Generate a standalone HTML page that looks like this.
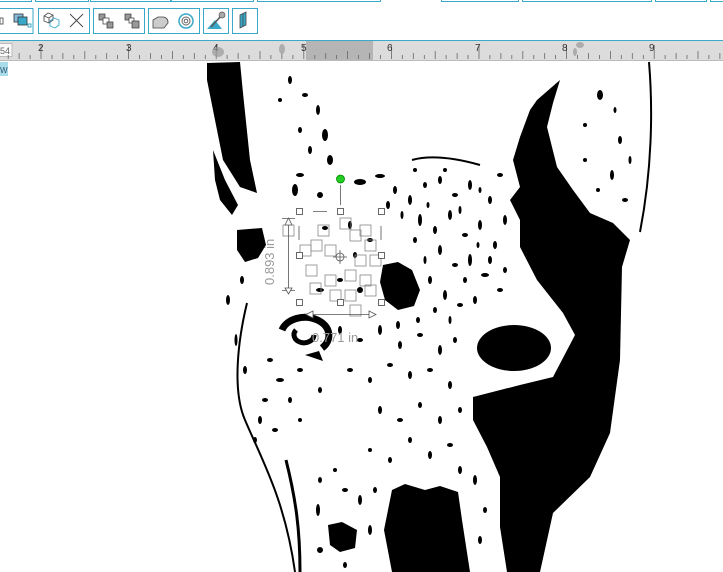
<!DOCTYPE html>
<html><head><meta charset="utf-8"><style>
html,body{margin:0;padding:0;width:723px;height:572px;overflow:hidden;background:#fff;font-family:"Liberation Sans",sans-serif}
</style></head><body>
<svg width="723" height="572" viewBox="0 0 723 572" xmlns="http://www.w3.org/2000/svg" style="position:absolute;left:0;top:0">
<g stroke="#3aa9c9" stroke-width="1" fill="none">
<path d="M0 1.5H31.5V0M35.5 0V1.5H88.5V0M90.5 0V1.5H170.5V0M171.5 0V1.5H253.5V0M257.5 0V1.5H380.5V0M441.5 0V1.5H518.5V0M522.5 0V1.5H651.5V0M655.5 0V1.5H706.5V0M710.5 0V1.5H723"/>
<rect x="-2" y="8.5" width="35" height="25"/>
<rect x="38.5" y="8.5" width="51" height="25"/>
<rect x="93.5" y="8.5" width="51" height="25"/>
<rect x="148.5" y="8.5" width="51" height="25"/>
<rect x="203.5" y="8.5" width="25" height="25"/>
<rect x="232.5" y="8.5" width="25" height="25"/>
</g>
<rect x="0" y="18" width="3" height="6" fill="none" stroke="#666"/>
<rect x="14" y="14" width="9" height="8" fill="#8bd" stroke="#333" stroke-width="0.8"/>
<rect x="18" y="17" width="9" height="8" fill="#3aa9c9" stroke="#333" stroke-width="0.8"/>
<rect x="28" y="24" width="3" height="3" fill="#fff" stroke="#3aa9c9"/>
<g fill="none" stroke="#555" stroke-width="0.9">
<path d="M44 16l4-3 5 2v5l-4 3-5-2z M44 16l5 2 4-3 M49 18v5"/>
<path d="M50 21l4-3 5 2v5l-4 3-5-2z" stroke="#3aa9c9"/>
<path d="M70 14l13 13M83 14l-13 13" stroke="#444"/>
</g>
<rect x="99" y="14" width="6" height="6" fill="#999" stroke="#333" stroke-width="0.7"/>
<rect x="103" y="18" width="6" height="6" fill="#fff" stroke="#333" stroke-width="0.7"/>
<rect x="107" y="22" width="6" height="6" fill="#999" stroke="#333" stroke-width="0.7"/>
<rect x="125" y="14" width="6" height="6" fill="#999" stroke="#333" stroke-width="0.7"/>
<rect x="129" y="18" width="5" height="5" fill="#fff" stroke="#333" stroke-width="0.7"/>
<rect x="132" y="21" width="7" height="7" fill="#999" stroke="#333" stroke-width="0.7"/>
<path d="M153 28v-8l5-3h5a5 5 0 0 1 5 5v1l-4 5z" fill="#ccc" stroke="#444" stroke-width="0.8"/>
<circle cx="186" cy="21" r="7" fill="none" stroke="#3aa9c9" stroke-width="1.5"/>
<circle cx="186" cy="21" r="4" fill="none" stroke="#666"/>
<circle cx="186" cy="21" r="1.8" fill="none" stroke="#666"/>
<path d="M207 29l8-9 7 9z" fill="#3aa9c9"/>
<path d="M211 27l10-11" stroke="#555" stroke-width="1.5"/>
<circle cx="222" cy="15" r="3" fill="#aaa" stroke="#555" stroke-width="0.7"/>
<path d="M240 15l6-3v13l-6 3z" fill="#3aa9c9" stroke="#444" stroke-width="0.8"/>
<path d="M243 13v13" stroke="#444" stroke-width="0.8"/>
<rect x="0" y="40" width="723" height="20" fill="#dcdcdc"/>
<rect x="306" y="41" width="67" height="19" fill="#b5b5b5"/>
<path d="M0 40.5H723" stroke="#3aa9c9"/>
<path d="M0 60.5H723" stroke="#bbb"/>
<rect x="-2" y="43.5" width="14" height="13" fill="#fafafa" stroke="#bbb"/>
<text x="0" y="54" font-size="9" fill="#666">54</text>
<g stroke="#666" stroke-width="0.8" id="ticks"></g>
<g font-size="10" fill="#333">
<text x="38" y="51">2</text><text x="126" y="51">3</text><text x="213" y="51">4</text><text x="301" y="51">5</text><text x="387" y="51">6</text><text x="475" y="51">7</text><text x="562" y="51">8</text><text x="649" y="51">9</text>
</g>
<rect x="0" y="62" width="8" height="14" fill="#a8dce9"/>
<text x="0" y="73" font-size="8" fill="#357">W</text>
<g fill="#999" opacity="0.7"><ellipse cx="218" cy="52" rx="6" ry="5"/><ellipse cx="282" cy="49" rx="3" ry="5"/><ellipse cx="580" cy="45" rx="4" ry="3"/><ellipse cx="575" cy="52" rx="2" ry="4"/></g>
<g fill="#000">
<path d="M207 63L240 62 243 93 250 160 257 193 240 187 223 160 213 110 207 80Z"/>
<path d="M560 80L553 103 547 127 557 167 573 190 590 213 613 223 630 240 622 267 620 360 610 433 590 477 553 513 540 572 507 572 500 527 500 477 487 447 473 420 473 397 520 385 553 377 575 335 563 313 537 280 520 247 520 220 510 200 520 187 513 160 520 137 530 110 537 100Z"/>
<path d="M237 230L262 228 266 245 258 258 245 262 237 250Z"/>
<path d="M383 265L398 262 412 270 420 290 414 306 398 310 385 300 380 282Z"/>
<path d="M392 490L405 484 425 490 440 486 458 492 462 520 470 572 392 572 384 530Z"/>
<path d="M328 525L342 522 357 530 355 548 340 552 330 545Z"/>
<path d="M213 150L225 180 238 205 232 215 220 200 215 180Z"/>
</g>
<ellipse cx="516" cy="350" rx="42" ry="27" fill="none" stroke="#fff" stroke-width="5"/>
<ellipse cx="514" cy="348" rx="37" ry="23" fill="#000"/>
<path d="M282 330a24 18 0 1 1 40 18" fill="none" stroke="#000" stroke-width="7"/>
<path d="M296 330a10 8 0 1 0 18 5" fill="none" stroke="#000" stroke-width="5"/>
<path d="M305 355l18 6-4-10z" fill="#000"/>
<g fill="none" stroke="#000" stroke-width="2">
<path d="M649 62C653 110 652 170 640 232"/>
<path d="M247 303C238 340 232 390 245 420C262 460 285 500 295 572"/>
<path d="M412 160C430 155 455 158 480 165"/>
<path d="M286 460C296 500 300 530 300 572" stroke-width="3"/>
</g>
<g fill="#000">
<ellipse cx="290" cy="80" rx="2" ry="4"/><ellipse cx="305" cy="95" rx="3" ry="2"/><ellipse cx="318" cy="110" rx="2" ry="5"/><ellipse cx="300" cy="130" rx="2" ry="3"/><ellipse cx="325" cy="135" rx="3" ry="6"/><ellipse cx="310" cy="150" rx="2" ry="4"/><ellipse cx="330" cy="160" rx="3" ry="5"/><ellipse cx="300" cy="175" rx="4" ry="2"/><ellipse cx="320" cy="195" rx="3" ry="3"/><ellipse cx="280" cy="100" rx="2" ry="2"/><ellipse cx="295" cy="190" rx="3" ry="6"/>
<ellipse cx="360" cy="182" rx="6" ry="3"/><ellipse cx="380" cy="176" rx="5" ry="2"/><ellipse cx="395" cy="190" rx="2" ry="4"/><ellipse cx="410" cy="200" rx="2" ry="5"/><ellipse cx="425" cy="185" rx="2" ry="3"/><ellipse cx="440" cy="180" rx="2" ry="4"/><ellipse cx="455" cy="195" rx="3" ry="2"/><ellipse cx="470" cy="185" rx="2" ry="5"/><ellipse cx="490" cy="200" rx="2" ry="4"/><ellipse cx="500" cy="175" rx="3" ry="2"/><ellipse cx="505" cy="220" rx="2" ry="5"/>
<ellipse cx="420" cy="220" rx="2" ry="6"/><ellipse cx="435" cy="230" rx="2" ry="4"/><ellipse cx="450" cy="215" rx="2" ry="5"/><ellipse cx="465" cy="235" rx="3" ry="2"/><ellipse cx="480" cy="225" rx="2" ry="5"/><ellipse cx="495" cy="245" rx="2" ry="4"/><ellipse cx="440" cy="250" rx="2" ry="5"/><ellipse cx="455" cy="265" rx="3" ry="2"/><ellipse cx="470" cy="260" rx="2" ry="6"/><ellipse cx="485" cy="275" rx="4" ry="2"/><ellipse cx="500" cy="290" rx="3" ry="2"/><ellipse cx="430" cy="280" rx="2" ry="4"/><ellipse cx="445" cy="295" rx="2" ry="5"/><ellipse cx="460" cy="305" rx="3" ry="2"/><ellipse cx="475" cy="300" rx="2" ry="4"/>
<ellipse cx="388" cy="205" rx="2" ry="4"/><ellipse cx="402" cy="215" rx="1.5" ry="4"/><ellipse cx="415" cy="240" rx="2" ry="3"/><ellipse cx="428" cy="205" rx="1.5" ry="3"/><ellipse cx="445" cy="170" rx="2" ry="2"/><ellipse cx="460" cy="210" rx="1.5" ry="4"/><ellipse cx="478" cy="245" rx="1.5" ry="3"/><ellipse cx="490" cy="260" rx="2" ry="4"/><ellipse cx="505" cy="270" rx="2" ry="3"/><ellipse cx="425" cy="260" rx="1.5" ry="4"/><ellipse cx="435" cy="310" rx="2" ry="3"/><ellipse cx="450" cy="320" rx="1.5" ry="4"/><ellipse cx="465" cy="280" rx="2" ry="3"/><ellipse cx="418" cy="320" rx="2" ry="3"/><ellipse cx="398" cy="325" rx="2" ry="4"/><ellipse cx="480" cy="190" rx="1.5" ry="3"/><ellipse cx="415" cy="170" rx="2" ry="2"/>
<ellipse cx="350" cy="225" rx="2" ry="4"/><ellipse cx="370" cy="240" rx="3" ry="2"/><ellipse cx="355" cy="255" rx="2" ry="3"/><ellipse cx="325" cy="228" rx="3" ry="2"/><ellipse cx="340" cy="280" rx="3" ry="2"/><ellipse cx="320" cy="290" rx="4" ry="2"/><ellipse cx="360" cy="290" rx="3" ry="3"/>
<ellipse cx="340" cy="330" rx="2" ry="4"/><ellipse cx="360" cy="340" rx="3" ry="2"/><ellipse cx="380" cy="330" rx="2" ry="5"/><ellipse cx="400" cy="345" rx="2" ry="4"/><ellipse cx="420" cy="335" rx="3" ry="2"/><ellipse cx="440" cy="350" rx="2" ry="5"/><ellipse cx="455" cy="340" rx="2" ry="3"/><ellipse cx="390" cy="365" rx="3" ry="2"/><ellipse cx="410" cy="375" rx="2" ry="4"/><ellipse cx="430" cy="370" rx="3" ry="2"/><ellipse cx="450" cy="385" rx="2" ry="4"/><ellipse cx="370" cy="380" rx="2" ry="3"/><ellipse cx="350" cy="370" rx="3" ry="2"/>
<ellipse cx="270" cy="360" rx="3" ry="2"/><ellipse cx="280" cy="380" rx="4" ry="2"/><ellipse cx="265" cy="400" rx="3" ry="2"/><ellipse cx="290" cy="400" rx="2" ry="3"/><ellipse cx="300" cy="370" rx="3" ry="2"/><ellipse cx="320" cy="390" rx="2" ry="3"/><ellipse cx="260" cy="420" rx="2" ry="4"/><ellipse cx="275" cy="430" rx="3" ry="2"/><ellipse cx="300" cy="420" rx="2" ry="2"/><ellipse cx="255" cy="440" rx="2" ry="3"/>
<ellipse cx="380" cy="410" rx="2" ry="4"/><ellipse cx="400" cy="420" rx="3" ry="2"/><ellipse cx="420" cy="405" rx="2" ry="3"/><ellipse cx="440" cy="420" rx="2" ry="4"/><ellipse cx="460" cy="410" rx="2" ry="3"/><ellipse cx="410" cy="440" rx="2" ry="3"/><ellipse cx="430" cy="455" rx="2" ry="4"/><ellipse cx="450" cy="445" rx="3" ry="2"/><ellipse cx="390" cy="460" rx="2" ry="3"/><ellipse cx="370" cy="450" rx="2" ry="2"/><ellipse cx="460" cy="470" rx="2" ry="4"/>
<ellipse cx="320" cy="480" rx="2" ry="3"/><ellipse cx="335" cy="470" rx="2" ry="2"/><ellipse cx="345" cy="490" rx="3" ry="2"/><ellipse cx="360" cy="500" rx="2" ry="5"/><ellipse cx="375" cy="490" rx="2" ry="3"/><ellipse cx="318" cy="510" rx="2" ry="6"/><ellipse cx="370" cy="530" rx="2" ry="5"/><ellipse cx="320" cy="550" rx="3" ry="3"/><ellipse cx="345" cy="565" rx="2" ry="3"/><ellipse cx="475" cy="480" rx="2" ry="5"/><ellipse cx="485" cy="510" rx="2" ry="3"/><ellipse cx="480" cy="540" rx="2" ry="4"/>
<ellipse cx="600" cy="95" rx="3" ry="5"/><ellipse cx="620" cy="140" rx="2" ry="4"/><ellipse cx="585" cy="125" rx="2" ry="2"/><ellipse cx="612" cy="175" rx="2" ry="5"/><ellipse cx="625" cy="200" rx="3" ry="2"/><ellipse cx="585" cy="160" rx="2" ry="2"/><ellipse cx="615" cy="110" rx="1.5" ry="3"/><ellipse cx="630" cy="160" rx="1.5" ry="4"/><ellipse cx="598" cy="190" rx="2" ry="2"/>
<ellipse cx="228" cy="300" rx="2" ry="5"/><ellipse cx="242" cy="280" rx="2" ry="4"/><ellipse cx="236" cy="340" rx="1.5" ry="6"/><ellipse cx="245" cy="370" rx="2" ry="4"/>
</g>
<g fill="none" stroke="#888" stroke-width="0.8">
<rect x="283" y="225" width="11" height="11"/><rect x="311" y="240" width="11" height="11"/><rect x="318" y="225" width="11" height="11"/><rect x="306" y="265" width="11" height="11"/><rect x="310" y="283" width="11" height="11"/><rect x="325" y="275" width="11" height="11"/><rect x="340" y="218" width="11" height="11"/><rect x="350" y="230" width="11" height="11"/><rect x="360" y="225" width="11" height="11"/><rect x="365" y="240" width="11" height="11"/><rect x="355" y="255" width="11" height="11"/><rect x="370" y="255" width="11" height="11"/><rect x="345" y="270" width="11" height="11"/><rect x="360" y="275" width="11" height="11"/><rect x="330" y="290" width="11" height="11"/><rect x="345" y="290" width="11" height="11"/><rect x="365" y="285" width="11" height="11"/><rect x="350" y="305" width="11" height="11"/><rect x="325" y="245" width="11" height="11"/><rect x="300" y="245" width="11" height="11"/>
</g>
<g fill="#fff" stroke="#444" stroke-width="0.8">
<rect x="296.5" y="208.5" width="6" height="6"/><rect x="337.5" y="208.5" width="6" height="6"/><rect x="378.5" y="208.5" width="6" height="6"/><rect x="296.5" y="252.5" width="6" height="6"/><rect x="378.5" y="252.5" width="6" height="6"/><rect x="296.5" y="299.5" width="6" height="6"/><rect x="337.5" y="299.5" width="6" height="6"/><rect x="378.5" y="299.5" width="6" height="6"/>
</g>
<g stroke="#555" stroke-width="0.8" fill="none">
<path d="M340.5 185V205M313 211.5H327M288.5 220V290M282 218.5H295M282 290.5H295M310 314.5H372M299 226V240M381 226V240"/>
<path d="M285 225L288.5 218 292 225Z M285 288L288.5 294 292 288Z M313 311L306 314.5 313 318Z M369 311L376 314.5 369 318Z" fill="#fff"/>
<circle cx="340" cy="257" r="4"/><path d="M333 257H347M340 250V264"/>
</g>
<circle cx="340.5" cy="179" r="4" fill="#22cc22" stroke="#080" stroke-width="0.8"/>
<text x="0" y="0" font-size="13" fill="#999" transform="translate(274 285) rotate(-90)">0.893 in</text>
<text x="312" y="342" font-size="13" fill="#999">0.771 in</text>
</svg>
<script>
var g=document.getElementById('ticks'),s='';
for(var i=-16;i<100;i++){var x=41+i*87.6/8;if(x<0||x>723)continue;var h=i%8==0?14:(i%4==0?8:(i%2==0?6:4));s+='<line x1="'+x.toFixed(1)+'" x2="'+x.toFixed(1)+'" y1="'+(59-h)+'" y2="59"/>';}
g.innerHTML=s;
</script>
</body></html>
